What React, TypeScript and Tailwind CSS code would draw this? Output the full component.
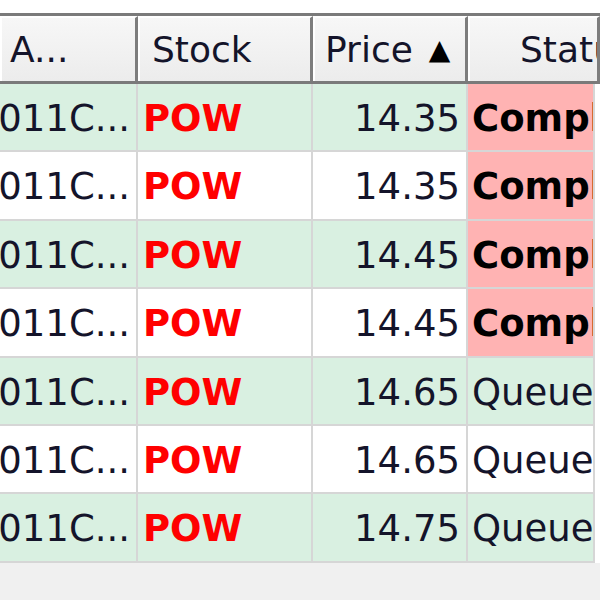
import React from 'react';

type Row = { price: string; status: 'Complete' | 'Queued' };

const rows: Row[] = [
  { price: '14.35', status: 'Complete' },
  { price: '14.35', status: 'Complete' },
  { price: '14.45', status: 'Complete' },
  { price: '14.45', status: 'Complete' },
  { price: '14.65', status: 'Queued' },
  { price: '14.65', status: 'Queued' },
  { price: '14.75', status: 'Queued' },
];

function HeaderCell({ children, className = '' }: { children: React.ReactNode; className?: string }) {
  return (
    <div
      className={`flex items-center h-full bg-gradient-to-b from-[#f7f7f7] to-[#ececec] border-l-2 border-t-2 border-white border-r-[3px] border-r-[#7d7d7d] overflow-hidden whitespace-nowrap ${className}`}
    >
      {children}
    </div>
  );
}

export default function App() {
  return (
    <div
      className="w-[600px] h-[600px] overflow-hidden bg-white text-[#14142a]"
      style={{ fontFamily: '"DejaVu Sans", Verdana, sans-serif' }}
    >
      {/* top strip */}
      <div className="h-[13px] bg-white" />

      {/* header */}
      <div className="h-[71px] border-t-[3px] border-b-[3px] border-[#7a7a7a] grid grid-cols-[138px_175px_155px_1fr] text-[36px] bg-[#f0f0f0]">
        <HeaderCell className="pl-[8px]">A...</HeaderCell>
        <HeaderCell className="pl-[12px]">Stock</HeaderCell>
        <HeaderCell className="pl-[10px] gap-[16px]">
          <span>Price</span>
          <span className="text-[28px] text-black">▲</span>
        </HeaderCell>
        <HeaderCell className="pl-[50px] border-r-0">Status</HeaderCell>
      </div>

      {/* body */}
      <div className="border-r-2 border-r-[#d6d6d6] w-[595px]">
        {rows.map((r, i) => {
          const green = i % 2 === 0;
          const rowBg = green ? 'bg-[#d9f0e1]' : 'bg-white';
          const done = r.status === 'Complete';
          return (
            <div
              key={i}
              className={`grid grid-cols-[138px_175px_155px_1fr] h-[68.4px] border-b-2 border-[#d6d6d6] text-[37px] pt-[3px] ${rowBg}`}
            >
              <div className="flex items-center justify-end pr-[6px] overflow-hidden whitespace-nowrap border-r-2 border-[#d6d6d6] -mt-[3px] pt-[3px]">
                <span>2011C...</span>
              </div>
              <div className="flex items-center pl-[5px] border-r-2 border-[#d6d6d6] font-bold text-[#ff0000] -mt-[3px] pt-[3px]">
                POW
              </div>
              <div className="flex items-center justify-end pr-[6px] border-r-2 border-[#d6d6d6] -mt-[3px] pt-[3px]">
                {r.price}
              </div>
              <div
                className={`flex items-center pl-[4px] overflow-hidden whitespace-nowrap -mt-[3px] pt-[3px] ${
                  done ? 'bg-[#ffb3b3] font-bold text-black' : ''
                }`}
              >
                {done ? 'Complete' : 'Queued'}
              </div>
            </div>
          );
        })}
      </div>

      {/* empty area */}
      <div className="h-[40px] bg-[#f0f0f0] border-b-[3px] border-white" />
    </div>
  );
}
